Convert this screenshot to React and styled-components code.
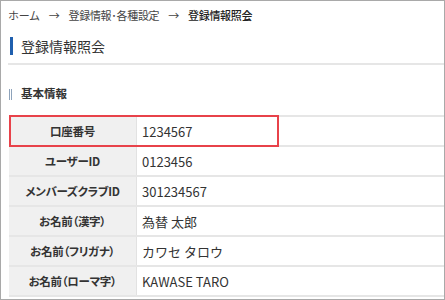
import React from 'react'
import styled, { createGlobalStyle } from 'styled-components'

const rows = [
  { label: '口座番号', value: '1234567', marked: true },
  { label: 'ユーザーID', value: '0123456' },
  { label: 'メンバーズクラブID', value: '301234567' },
  { label: 'お名前（漢字）', value: '為替 太郎' },
  { label: 'お名前（フリガナ）', value: 'カワセ タロウ' },
  { label: 'お名前（ローマ字）', value: 'KAWASE TARO' },
];

function App() {
  return (
    <Frame>
      <GlobalStyle />
      <Breadcrumb>
        <span>ホーム</span>
        <Arrow>→</Arrow>
        <span>登録情報･各種設定</span>
        <Arrow>→</Arrow>
        <Current>登録情報照会</Current>
      </Breadcrumb>

      <PageTitle>登録情報照会</PageTitle>

      <SectionTitle>基本情報</SectionTitle>

      <Table>
        {rows.map((row) => (
          <Row key={row.label}>
            <Label>{row.label}</Label>
            <Value>{row.value}</Value>
            {row.marked && <Highlight />}
          </Row>
        ))}
      </Table>
    </Frame>
  )
}

export default App

const GlobalStyle = createGlobalStyle`
  body {
    margin: 0;
    background: #fff;
    font-family: "Noto Sans CJK JP", "Noto Sans", sans-serif;
    color: #333;
  }
`;

const Frame = styled.div`
  width: 445px;
  height: 300px;
  box-sizing: border-box;
  border: 1px solid #a9a9a9;
  overflow: hidden;
  padding-left: 7px;
`;

const Breadcrumb = styled.div`
  display: flex;
  align-items: center;
  height: 16px;
  margin-top: 6px;
  font-size: 11px;
  color: #444;
  letter-spacing: -0.3px;
`;

const Arrow = styled.span`
  margin: 0 9px;
`;

const Current = styled.span`
  color: #222;
  font-weight: 500;
`;

const PageTitle = styled.h1`
  margin: 13px 0 0;
  padding: 0 0 7px 13px;
  position: relative;
  font-size: 14px;
  font-weight: 400;
  line-height: 20px;
  color: #333;
  border-bottom: 2px solid #e6e6e6;

  &::before {
    content: "";
    position: absolute;
    left: 2px;
    top: 1px;
    width: 3px;
    height: 18px;
    background: #1f5fae;
  }
`;

const SectionTitle = styled.h2`
  margin: 20px 0 0;
  padding-left: 13px;
  position: relative;
  font-size: 11.5px;
  font-weight: 700;
  line-height: 16px;
  color: #333;

  &::before {
    content: "";
    position: absolute;
    left: 1px;
    top: 4px;
    width: 1px;
    height: 11px;
    background: #8ea3bb;
    box-shadow: 2px 0 0 #8ea3bb;
  }
`;

const Table = styled.div`
  margin-top: 14px;
  margin-left: 1px;
  border-top: 2px solid #e6e6e6;
`;

const Row = styled.div`
  position: relative;
  display: grid;
  grid-template-columns: 128px 1fr;
  height: 28px;
  border-bottom: 2px solid #e6e6e6;
`;

const Label = styled.div`
  display: flex;
  align-items: center;
  justify-content: center;
  background: #f0f0f0;
  border-right: 1px solid #e2e2e2;
  font-size: 11.5px;
  font-weight: 700;
  color: #333;
  letter-spacing: -0.3px;
  font-feature-settings: "palt";
`;

const Value = styled.div`
  display: flex;
  align-items: center;
  padding-left: 5px;
  font-size: 13px;
  color: #333;
`;

const Highlight = styled.div`
  position: absolute;
  left: 0;
  top: -2px;
  width: 270px;
  height: 32px;
  box-sizing: border-box;
  border: 2px solid #e8424a;
`;
